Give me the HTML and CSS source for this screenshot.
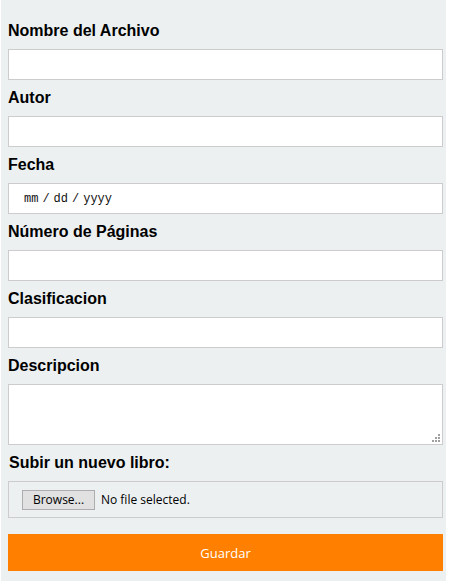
FILE: index.html
```html
<!DOCTYPE html>
<html lang="es">
<head>
<meta charset="utf-8">
<title>Subir libro</title>
<link rel="stylesheet" href="styles.css">
</head>
<body>
<form class="panel">
  <div class="field">
    <label class="label">Nombre del Archivo</label>
    <input class="input" type="text">
  </div>
  <div class="field">
    <label class="label">Autor</label>
    <input class="input" type="text">
  </div>
  <div class="field">
    <label class="label">Fecha</label>
    <div class="input date"><span>mm</span><span class="sep">/</span><span>dd</span><span class="sep">/</span><span>yyyy</span></div>
  </div>
  <div class="field">
    <label class="label">Número de Páginas</label>
    <input class="input" type="text">
  </div>
  <div class="field">
    <label class="label">Clasificacion</label>
    <input class="input" type="text">
  </div>
  <div class="field">
    <label class="label">Descripcion</label>
    <div class="area-wrap">
      <textarea class="input area"></textarea>
      <svg class="grip" width="8" height="8" viewBox="0 0 8 8" aria-hidden="true">
        <rect x="6" y="0" width="2" height="2" fill="#a0a0a0"/>
        <rect x="3" y="3" width="2" height="2" fill="#a0a0a0"/>
        <rect x="6" y="3" width="2" height="2" fill="#a0a0a0"/>
        <rect x="0" y="6" width="2" height="2" fill="#a0a0a0"/>
        <rect x="3" y="6" width="2" height="2" fill="#a0a0a0"/>
        <rect x="6" y="6" width="2" height="2" fill="#a0a0a0"/>
      </svg>
    </div>
  </div>
  <div class="field">
    <label class="label upload-label">Subir un nuevo libro:</label>
    <div class="filebox">
      <span class="browse">Browse...</span>
      <span class="filename">No file selected.</span>
    </div>
  </div>
  <button class="save" type="button">Guardar</button>
</form>
</body>
</html>
```

FILE: styles.css
```css
html, body {
  margin: 0;
  padding: 0;
  background: #ffffff;
}
body {
  padding-left: 1px;
}
.panel {
  width: 445px;
  min-height: 581px;
  box-sizing: border-box;
  background: #ecf0f1;
  padding: 13px 3px 0 7px;
  display: flex;
  flex-direction: column;
  font-family: "Liberation Sans", Arial, sans-serif;
}
.field {
  display: flex;
  flex-direction: column;
  margin-top: 9px;
}
.label {
  font-size: 16px;
  font-weight: bold;
  line-height: 18px;
  color: #000;
  margin-bottom: 9px;
}
.upload-label {
  padding-left: 1px;
}
.input {
  display: block;
  width: 100%;
  box-sizing: border-box;
  height: 31px;
  margin: 0;
  border: 1px solid #cccccc;
  background: #ffffff;
  border-radius: 0;
  outline: none;
  padding: 0 8px;
}
.date {
  display: flex;
  align-items: center;
  padding-left: 15px;
  font-family: "Liberation Mono", "Courier New", monospace;
  font-size: 12px;
  color: #111;
  gap: 4px;
}
.area-wrap {
  position: relative;
}
.area {
  height: 61px;
  resize: none;
}
.grip {
  position: absolute;
  right: 3px;
  bottom: 3px;
}
.filebox {
  height: 37px;
  box-sizing: border-box;
  border: 1px solid #cccccc;
  display: flex;
  align-items: center;
  padding-left: 13px;
  gap: 6px;
  font-family: "Open Sans", sans-serif;
  font-size: 12px;
  color: #000;
}
.browse {
  box-sizing: border-box;
  width: 73px;
  height: 20px;
  border: 1px solid #adadad;
  background: #e1e1e1;
  display: flex;
  align-items: center;
  justify-content: center;
}
.save {
  margin-top: 16px;
  height: 37px;
  border: 0;
  background: #ff8000;
  color: #ffffff;
  font-family: "Open Sans", sans-serif;
  font-size: 13px;
  padding: 0;
}
```
